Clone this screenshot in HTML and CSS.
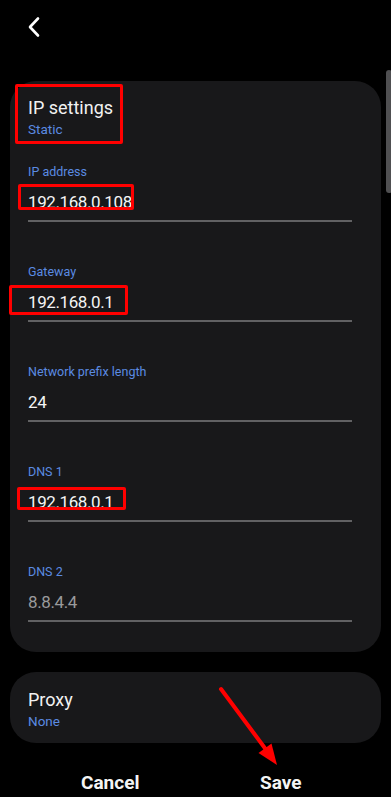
FILE: index.html
```html
<!DOCTYPE html>
<html lang="en">
<head>
  <meta charset="UTF-8" />
  <meta name="viewport" content="width=device-width, initial-scale=1.0"/>
  <title>IP settings</title>
  <link rel="stylesheet" href="styles.css">
</head>
<body>
<div class="screen">
  <div class="top-bar">
    <svg class="back" width="16" height="22" viewBox="0 0 16 22">
      <polyline points="11,2.5 3,11 11,19.5" fill="none" stroke="#fff" stroke-width="2.6" stroke-linecap="round" stroke-linejoin="round"/>
    </svg>
  </div>

  <div class="card">
    <div class="card-head">
      <div class="title">IP settings</div>
      <div class="sub">Static</div>
      <span class="mark mark-head"></span>
    </div>

    <div class="field">
      <div class="label">IP address</div>
      <div class="value">192.168.0.108</div>
      <span class="mark mark-ip"></span>
    </div>

    <div class="field">
      <div class="label">Gateway</div>
      <div class="value">192.168.0.1</div>
      <span class="mark mark-gw"></span>
    </div>

    <div class="field">
      <div class="label">Network prefix length</div>
      <div class="value">24</div>
    </div>

    <div class="field">
      <div class="label">DNS 1</div>
      <div class="value">192.168.0.1</div>
      <span class="mark mark-dns"></span>
    </div>

    <div class="field">
      <div class="label">DNS 2</div>
      <div class="value hint">8.8.4.4</div>
    </div>
  </div>

  <div class="card proxy">
    <div class="title">Proxy</div>
    <div class="sub">None</div>
  </div>

  <div class="actions">
    <button class="action">Cancel</button>
    <button class="action">Save</button>
  </div>

  <div class="scrollbar"></div>

  <svg class="arrow" width="391" height="797" viewBox="0 0 391 797">
    <line x1="221" y1="689" x2="267" y2="751" stroke="#f00" stroke-width="4" stroke-linecap="round"/>
    <polygon points="277,765 258.5,753 271.5,743.5" fill="#f00"/>
  </svg>
</div>
</body>
</html>
```

FILE: styles.css
```css
body {
  margin: 0;
  padding: 0;
  background: #000;
  font-family: Roboto, 'Noto Sans', sans-serif;
  color: #f2f2f2;
}

.screen {
  position: relative;
  width: 391px;
  height: 797px;
  overflow: hidden;
  background: #000;
}

.top-bar {
  height: 81px;
  padding-left: 27px;
  box-sizing: border-box;
}

.back {
  display: block;
  padding-top: 16px;
}

.card {
  margin: 0 10px;
  background: #18181a;
  border-radius: 26px;
  padding: 15px 29px 30px 18px;
}

.card-head {
  position: relative;
  margin-bottom: 26px;
}

.title {
  font-size: 18px;
  line-height: 24px;
  color: #f2f2f2;
}

.sub {
  font-size: 13.5px;
  line-height: 18px;
  color: #5b8be2;
}

.field {
  position: relative;
  margin-bottom: 42px;
}

.field:last-child {
  margin-bottom: 0;
}

.label {
  font-size: 12.5px;
  line-height: 16px;
  color: #5b8be2;
  margin-bottom: 10px;
}

.value {
  font-size: 17px;
  line-height: 24px;
  letter-spacing: -0.4px;
  padding-bottom: 6px;
  border-bottom: 2px solid #616163;
  color: #f4f4f4;
}

.value.hint {
  color: #9a9a9c;
}

.mark {
  position: absolute;
  border: 3px solid #f00;
  border-radius: 2px;
  box-sizing: border-box;
}

.mark-head {
  left: -13px;
  top: -12px;
  width: 108px;
  height: 60px;
}

.mark-ip {
  left: -10px;
  top: 20px;
  width: 116px;
  height: 26px;
}

.mark-gw {
  left: -19px;
  top: 21px;
  width: 119px;
  height: 30px;
}

.mark-dns {
  left: -11px;
  top: 23px;
  width: 109px;
  height: 23px;
}

.proxy {
  margin-top: 20px;
  padding: 16px 18px 13px 18px;
}

.actions {
  display: flex;
  padding: 26px 25px 0 25px;
}

.action {
  flex: 1;
  background: none;
  border: none;
  padding: 0;
  font-family: Roboto, 'Noto Sans', sans-serif;
  font-size: 19px;
  font-weight: bold;
  line-height: 28px;
  color: #f4f4f4;
}

.scrollbar {
  position: absolute;
  left: 386px;
  top: 70px;
  width: 6px;
  height: 123px;
  border-radius: 3px;
  background: #4f4f51;
}

.arrow {
  position: absolute;
  left: 0;
  top: 0;
  pointer-events: none;
}
```
